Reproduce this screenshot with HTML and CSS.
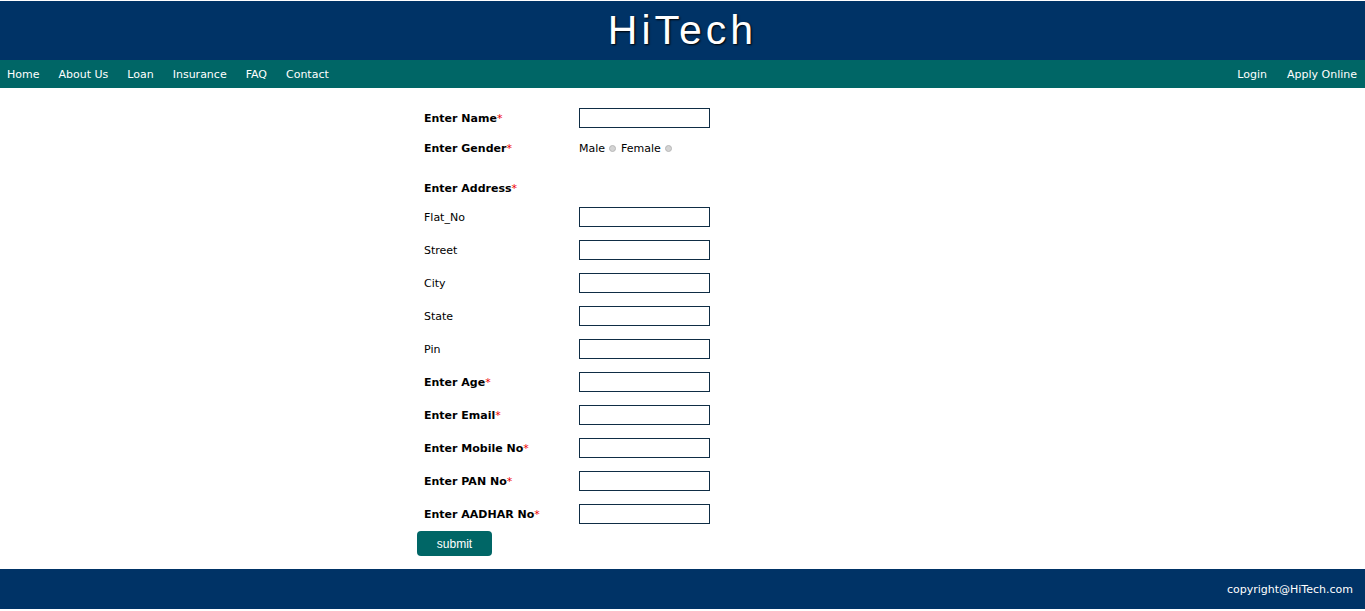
FILE: index.html
```html
<!DOCTYPE html>
<html>
<head>
<meta charset="utf-8">
<title>HiTech</title>
<link rel="stylesheet" href="styles.css">
</head>
<body>
<header class="masthead"><h1 class="brand">HiTech</h1></header>
<nav class="navbar">
  <ul class="nav-left">
    <li><a href="#">Home</a></li>
    <li><a href="#">About Us</a></li>
    <li><a href="#">Loan</a></li>
    <li><a href="#">Insurance</a></li>
    <li><a href="#">FAQ</a></li>
    <li><a href="#">Contact</a></li>
  </ul>
  <ul class="nav-right">
    <li><a href="#">Login</a></li>
    <li><a href="#">Apply Online</a></li>
  </ul>
</nav>
<main class="content">
  <form class="apply-form">
    <div class="row row-field"><label class="lbl strong">Enter Name<span class="req">*</span></label><input class="txt" type="text"></div>
    <div class="row row-gender"><span class="lbl strong">Enter Gender<span class="req">*</span></span>
      <span class="radios">Male <input class="radio" type="radio" name="g"> Female <input class="radio" type="radio" name="g"></span></div>
    <div class="row row-address"><span class="lbl strong">Enter Address<span class="req">*</span></span></div>
    <div class="row row-field"><label class="lbl">Flat_No</label><input class="txt" type="text"></div>
    <div class="row row-field"><label class="lbl">Street</label><input class="txt" type="text"></div>
    <div class="row row-field"><label class="lbl">City</label><input class="txt" type="text"></div>
    <div class="row row-field"><label class="lbl">State</label><input class="txt" type="text"></div>
    <div class="row row-field"><label class="lbl">Pin</label><input class="txt" type="text"></div>
    <div class="row row-field"><label class="lbl strong">Enter Age<span class="req">*</span></label><input class="txt" type="text"></div>
    <div class="row row-field"><label class="lbl strong">Enter Email<span class="req">*</span></label><input class="txt" type="text"></div>
    <div class="row row-field"><label class="lbl strong">Enter Mobile No<span class="req">*</span></label><input class="txt" type="text"></div>
    <div class="row row-field"><label class="lbl strong">Enter PAN No<span class="req">*</span></label><input class="txt" type="text"></div>
    <div class="row row-field"><label class="lbl strong">Enter AADHAR No<span class="req">*</span></label><input class="txt" type="text"></div>
    <button class="submit" type="button">submit</button>
  </form>
</main>
<footer class="footer">copyright@HiTech.com</footer>
</body>
</html>
```
FILE: styles.css
```css
html, body { margin: 0; padding: 0; background: #fff; }
body { font-family: "DejaVu Sans", Verdana, sans-serif; font-size: 11px; color: #000; padding-top: 1px; }

.masthead { background: #003366; height: 59px; text-align: center; }
.brand {
  margin: 0; font-family: "Liberation Sans", Arial, sans-serif; font-weight: normal;
  font-size: 41px; line-height: 59px; letter-spacing: 4px; color: #fff;
  text-shadow: 1px 1px 2px #000;
}

.navbar { background: #006666; height: 28px; display: flex; justify-content: space-between; }
.nav-left, .nav-right { list-style: none; margin: 0; display: flex; gap: 19px; }
.nav-left { padding: 0 0 0 7px; }
.nav-right { padding: 0 8px 0 0; gap: 20px; }
.navbar a { display: block; color: #fff; text-decoration: none; line-height: 26px; padding-top: 2px; }

.content { padding: 14px 0 13px 417px; }
.apply-form { display: flex; flex-direction: column; align-items: flex-start; }
.row { display: flex; align-items: center; height: 20px; }
.row-field { padding: 6px 0 7px; }
.row-gender { padding: 3px 0; }
.row-address { padding: 17px 0 3px; }
.lbl { width: 155px; padding-left: 7px; padding-top: 2px; line-height: 18px; }
.strong { font-weight: bold; }
.req { color: #e00; font-weight: normal; }

.txt {
  box-sizing: border-box; width: 131px; height: 20px; margin: 0;
  border: 1px solid #0f2d45; padding: 1px 3px; font: inherit; background: #fff;
}
.radios { display: flex; align-items: center; padding-top: 2px; line-height: 18px; }
.radio {
  appearance: none; -webkit-appearance: none; box-sizing: border-box;
  width: 7px; height: 7px; margin: -1px 5px 0 4px; border-radius: 50%;
  background: #d4d4d4; border: 1px solid #b8b8b8;
}
.submit {
  width: 75px; height: 25px; margin: 0; padding: 0; border: none; border-radius: 4px;
  background: #006666; color: #fff; font-family: "Liberation Sans", Arial, sans-serif; font-size: 12px;
}

.footer {
  background: #003366; color: #fff; height: 38px; line-height: 38px; padding-top: 2px;
  text-align: right; padding-right: 12px;
}
```
